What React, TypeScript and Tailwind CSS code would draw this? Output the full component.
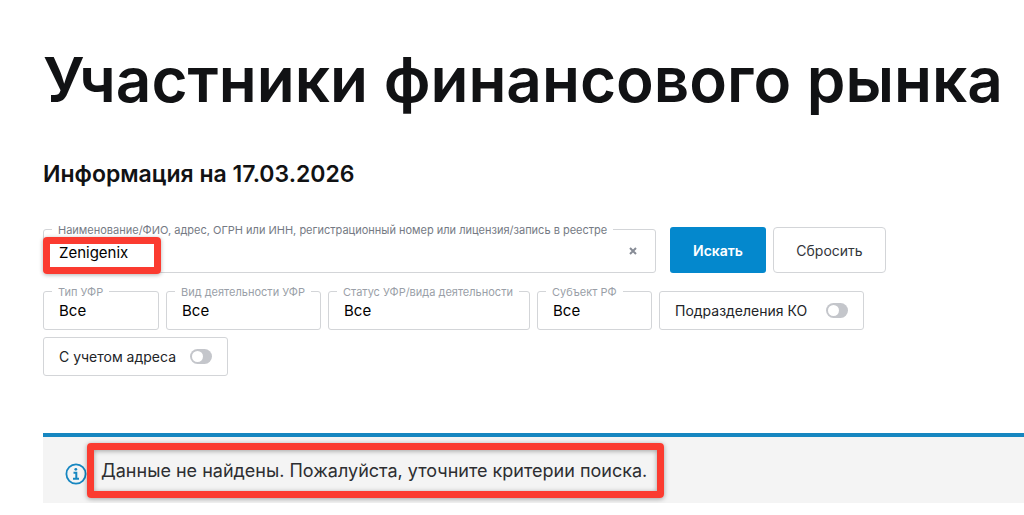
import React, { useState } from 'react';

interface SelectFieldProps {
  id: string;
  label: string;
  className: string;
}

function SelectField({ id, label, className }: SelectFieldProps) {
  return (
    <div className={`relative h-[39px] rounded-[3px] border border-[#d3d5d8] ${className}`}>
      <label
        htmlFor={id}
        className="absolute -top-2 left-2 bg-white px-1.5 text-[11px] leading-4 whitespace-nowrap text-[#9a9fa8]"
      >
        {label}
      </label>
      <select id={id} className="h-full w-full appearance-none bg-transparent pt-0.5 pl-[15px] text-[15px] text-black outline-none">
        <option>Все</option>
      </select>
    </div>
  );
}

interface ToggleFieldProps {
  label: string;
  className: string;
}

function ToggleField({ label, className }: ToggleFieldProps) {
  return (
    <label
      className={`flex h-[39px] items-center justify-between rounded-[3px] border border-[#d3d5d8] px-[15px] text-[14px] whitespace-nowrap text-[#222428] ${className}`}
    >
      {label}
      <input type="checkbox" className="peer sr-only" />
      <span className="flex h-[15px] w-[22px] items-center rounded-full bg-[#c4c6cb] px-0.5 peer-checked:justify-end peer-checked:bg-[#0488cd]">
        <span className="size-[11px] rounded-full bg-white" />
      </span>
    </label>
  );
}

export default function App() {
  const [query, setQuery] = useState('Zenigenix');

  return (
    <main className="bg-white pt-11 pl-[43px] font-['Inter',sans-serif]">
      <h1 className="text-[62px] leading-[72px] font-semibold whitespace-nowrap text-[#111214]">
        Участники финансового рынка
      </h1>
      <h2 className="mt-11 text-[23px] leading-7 font-semibold text-[#111214]">
        Информация на 17.03.2026
      </h2>

      <form onSubmit={(e) => e.preventDefault()} className="mt-[39px]">
        <div className="flex max-w-[843px] items-end">
          <div className="relative h-11 flex-1 rounded-[3px] border border-[#d3d5d8]">
            <label
              htmlFor="query"
              className="absolute -top-2 left-2 bg-white px-1.5 text-[11px] leading-4 whitespace-nowrap text-[#757a84]"
            >
              Наименование/ФИО, адрес, ОГРН или ИНН, регистрационный номер или лицензия/запись в реестре
            </label>
            <input
              id="query"
              type="text"
              value={query}
              onChange={(e) => setQuery(e.target.value)}
              className="h-full w-full pt-0.5 pr-10 pl-[15px] text-[15px] text-black outline-none"
            />
            <button
              type="button"
              aria-label="Очистить"
              onClick={() => setQuery('')}
              className="absolute top-4 right-[18px] text-[#878c96]"
            >
              <svg width="8" height="10" viewBox="0 0 8 10" stroke="currentColor" strokeWidth="2">
                <path d="M1 2l6 6M7 2L1 8" />
              </svg>
            </button>
            <div className="pointer-events-none absolute top-[7px] -left-px h-[37px] w-[118px] rounded-[4px] border-[7px] border-[#fb3b30] shadow-[0_1px_4px_rgba(0,0,0,0.3)]" />
          </div>
          <button type="submit" className="ml-3.5 h-[46px] w-24 rounded-[3px] bg-[#0488cd] text-[14px] font-semibold text-white">
            Искать
          </button>
          <button
            type="reset"
            onClick={() => setQuery('')}
            className="ml-[7px] h-[46px] w-[113px] rounded-[4px] border border-[#d3d5d8] text-[14px] text-[#33363b]"
          >
            Сбросить
          </button>
        </div>

        <div className="mt-[18px] flex flex-wrap gap-[7px]">
          <SelectField id="type" label="Тип УФР" className="w-[116px]" />
          <SelectField id="activity" label="Вид деятельности УФР" className="w-[155px]" />
          <SelectField id="status" label="Статус УФР/вида деятельности" className="w-[202px]" />
          <SelectField id="region" label="Субъект РФ" className="w-[115px]" />
          <ToggleField label="Подразделения КО" className="w-[205px]" />
          <ToggleField label="С учетом адреса" className="w-[185px]" />
        </div>
      </form>

      <div role="status" className="mt-[57px] flex items-center border-t-4 border-[#1686c0] bg-[#f4f4f4] pt-1.5 pb-[5px] pl-[22px]">
        <svg width="22" height="22" viewBox="0 0 22 22" fill="none" stroke="#1686c0" strokeWidth="2" className="mt-1.5 shrink-0">
          <circle cx="11" cy="11" r="9.6" strokeWidth="1.8" />
          <path d="M8.5 9.7h2.8v6M8 15.7h6" />
          <circle cx="10.8" cy="6.3" r="1.4" fill="#1686c0" stroke="none" />
        </svg>
        <div className="rounded-[4px] border-[7px] border-[#fb3b30] pt-[9px] pr-2.5 pb-2 pl-[7px] shadow-[0_1px_5px_rgba(0,0,0,0.35),inset_0_1px_5px_rgba(0,0,0,0.35)]">
          <p className="text-[18px] leading-6 whitespace-nowrap text-[#2d2e31]">
            Данные не найдены. Пожалуйста, уточните критерии поиска.
          </p>
        </div>
      </div>
    </main>
  );
}
